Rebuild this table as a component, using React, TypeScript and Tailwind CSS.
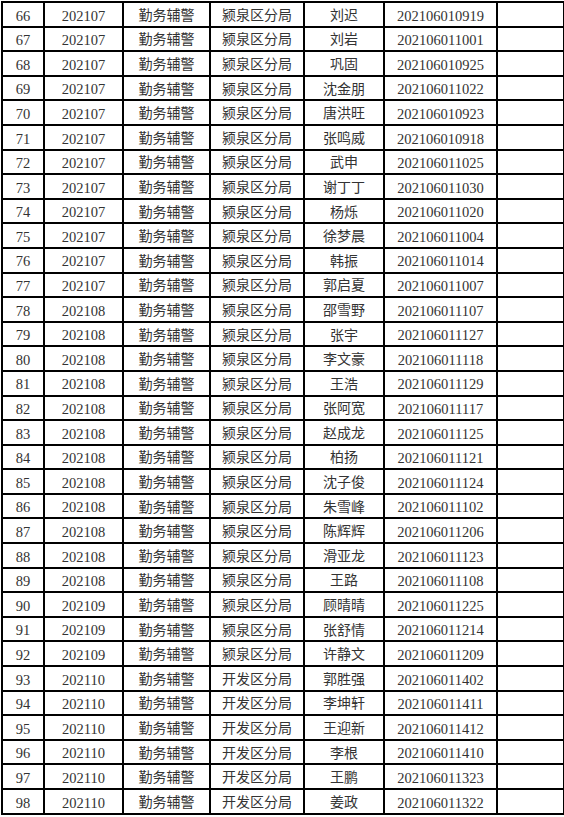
import React from "react";

type Row = [number, string, string, string, string, string];

const names = [
  "刘迟", "刘岩", "巩固", "沈金朋", "唐洪旺", "张鸣威", "武申", "谢丁丁", "杨烁", "徐梦晨", "韩振",
  "郭启夏", "邵雪野", "张宇", "李文豪", "王浩", "张阿宽", "赵成龙", "柏扬", "沈子俊", "朱雪峰",
  "陈辉辉", "滑亚龙", "王路", "顾晴晴", "张舒情", "许静文", "郭胜强", "李坤轩", "王迎新", "李根",
  "王鹏", "姜政",
];

const ids = [
  "202106010919", "202106011001", "202106010925", "202106011022", "202106010923", "202106010918",
  "202106011025", "202106011030", "202106011020", "202106011004", "202106011014", "202106011007",
  "202106011107", "202106011127", "202106011118", "202106011129", "202106011117", "202106011125",
  "202106011121", "202106011124", "202106011102", "202106011206", "202106011123", "202106011108",
  "202106011225", "202106011214", "202106011209", "202106011402", "202106011411", "202106011412",
  "202106011410", "202106011323", "202106011322",
];

const rows: Row[] = names.map((name, i) => {
  const n = 66 + i;
  const batch = n <= 77 ? "202107" : n <= 89 ? "202108" : n <= 92 ? "202109" : "202110";
  const unit = n <= 92 ? "颍泉区分局" : "开发区分局";
  return [n, batch, "勤务辅警", unit, name, ids[i]];
});

const cell = "border-2 border-black text-center align-middle p-0 pt-[3px] leading-none";
const num = "text-[14.5px]";

export default function App() {
  return (
    <div className="w-[564px] h-[817px] bg-white pl-px pt-px">
      <table
        className="border-collapse table-fixed w-[562px] h-[814px] text-[14px] text-[#333333]"
        style={{ fontFamily: '"Liberation Serif", "Noto Sans CJK SC", serif' }}
      >
        <colgroup>
          <col className="w-[42px]" />
          <col className="w-[79px]" />
          <col className="w-[87px]" />
          <col className="w-[94px]" />
          <col className="w-[80px]" />
          <col className="w-[113px]" />
          <col className="w-[67px]" />
        </colgroup>
        <tbody>
          {rows.map((r) => (
            <tr key={r[0]}>
              <td className={`${cell} ${num}`}>{r[0]}</td>
              <td className={`${cell} ${num}`}>{r[1]}</td>
              <td className={cell}>{r[2]}</td>
              <td className={cell}>{r[3]}</td>
              <td className={cell}>{r[4]}</td>
              <td className={`${cell} ${num}`}>{r[5]}</td>
              <td className={cell}></td>
            </tr>
          ))}
        </tbody>
      </table>
    </div>
  );
}
